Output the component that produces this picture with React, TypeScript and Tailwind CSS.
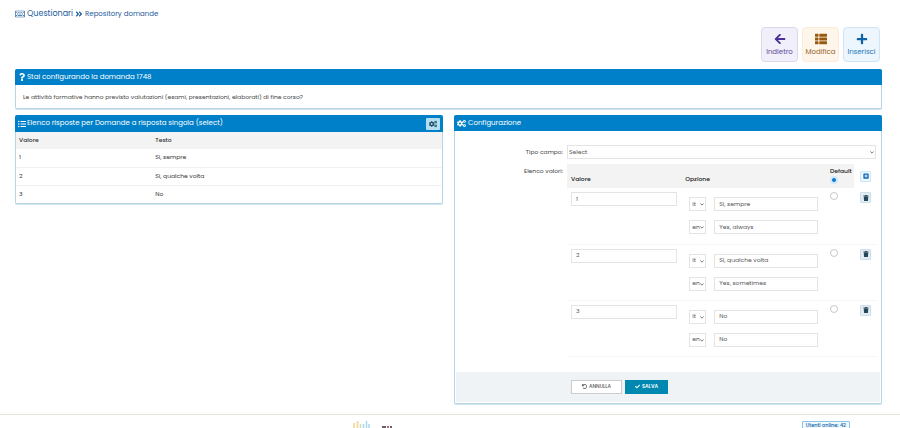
import { useState } from "react";
import {
  FaAngleDoubleRight,
  FaArrowLeft,
  FaCheck,
  FaCogs,
  FaListUl,
  FaPlus,
  FaPlusSquare,
  FaQuestion,
  FaRegKeyboard,
  FaThList,
  FaTrash,
  FaUndo,
} from "react-icons/fa";

const answers = [
  { value: "1", it: "Sì, sempre", en: "Yes, always" },
  { value: "2", it: "Sì, qualche volta", en: "Yes, sometimes" },
  { value: "3", it: "No", en: "No" },
];

const field = "h-[14px] border border-[#e4e4e4] bg-white text-[6px] text-[#555]";
const panel = "rounded-[2px] border border-t-0 border-[#b5d6e9] shadow-[0_1px_0_#d5e2e9]";

function Chevron({ className = "" }: { className?: string }) {
  return (
    <svg viewBox="0 0 6 4" className={`pointer-events-none absolute h-[3px] w-1 ${className}`}>
      <path d="M0.5 0.5 L3 3 L5.5 0.5" fill="none" stroke="#555" strokeWidth="1.2" />
    </svg>
  );
}

function Header() {
  return (
    <header>
      <nav className="flex items-center gap-[2px] pt-2 text-[#1d5d9b]">
        <FaRegKeyboard className="size-[10px]" />
        <a href="#questionari" className="text-[8px] leading-3">Questionari</a>
        <FaAngleDoubleRight className="size-2" />
        <a href="#repository" className="text-[7px] leading-3">Repository domande</a>
      </nav>
      <div className="mt-[7px] flex justify-end gap-1 pr-[2px]">
        <button className="flex h-[35px] w-[37px] flex-col items-center justify-center gap-[2px] rounded-[4px] border border-[#dcd8ec] bg-[#f1effa] text-[7px] leading-[10px] text-[#5b4a9c]">
          <FaArrowLeft className="size-3 text-[#4a2f96]" />
          Indietro
        </button>
        <button className="flex h-[35px] w-[37px] flex-col items-center justify-center gap-[2px] rounded-[4px] border border-[#fdebd8] bg-[#fff6eb] text-[7px] leading-[10px] text-[#96652a]">
          <FaThList className="size-3 text-[#96590f]" />
          Modifica
        </button>
        <button className="flex h-[35px] w-[37px] flex-col items-center justify-center gap-[2px] rounded-[4px] border border-[#cfe5f5] bg-[#edf6fd] text-[7px] leading-[10px] text-[#1a75b8]">
          <FaPlus className="size-3 text-[#0d63a5]" />
          Inserisci
        </button>
      </div>
    </header>
  );
}

function Question() {
  return (
    <section className={`mt-[7px] ${panel}`}>
      <h2 className="-mx-px flex h-4 items-center gap-px rounded-t-[2px] bg-[#0080c8] px-[3px] text-[7px] text-white">
        <FaQuestion className="size-2" />
        Stai configurando la domanda 1748
      </h2>
      <p className="px-[7px] pt-2 pb-[6px] text-[6px] leading-[9px] text-[#444]">
        Le attività formative hanno previsto valutazioni (esami, presentazioni, elaborati) di fine corso?
      </p>
    </section>
  );
}

function AnswerList() {
  return (
    <section className={panel}>
      <div className="-mx-px flex h-[17px] items-center justify-between rounded-t-[2px] bg-[#0080c8] px-[3px] text-white">
        <h2 className="flex items-center gap-px text-[7px]">
          <FaListUl className="size-2" />
          Elenco risposte per Domande a risposta singola (select)
        </h2>
        <button aria-label="Configura" className="flex h-3 w-[14px] items-center justify-center rounded-[1px] bg-[#b5def2] text-[#1d4a63]">
          <FaCogs className="size-2" />
        </button>
      </div>
      <table className="w-full text-left text-[6px] leading-[9px] text-[#333]">
        <thead>
          <tr className="h-[17px] bg-[#f3f3f3]">
            <th className="w-[32%] px-[3px] font-medium">Valore</th>
            <th className="px-[3px] font-medium">Testo</th>
          </tr>
        </thead>
        <tbody>
          {answers.map((answer) => (
            <tr key={answer.value} className="h-[18px] border-b border-[#f0f3f5] last:border-b-0">
              <td className="px-[3px]">{answer.value}</td>
              <td className="px-[3px]">{answer.it}</td>
            </tr>
          ))}
        </tbody>
      </table>
    </section>
  );
}

function OptionRow({ lang, text }: { lang: string; text: string }) {
  return (
    <div className="flex gap-2">
      <div className="relative">
        <select aria-label="Lingua" defaultValue={lang} className={`${field} w-[17px] appearance-none pl-[2px]`}>
          <option>it</option>
          <option>en</option>
        </select>
        <Chevron className="top-[6px] right-[2px]" />
      </div>
      <input aria-label="Testo opzione" defaultValue={text} className={`${field} min-w-0 flex-1 px-1`} />
    </div>
  );
}

function Radio({ checked, onChange, label }: { checked: boolean; onChange: () => void; label: string }) {
  return (
    <input
      type="radio"
      name="default"
      aria-label={label}
      checked={checked}
      onChange={onChange}
      className="block size-2 appearance-none rounded-full border border-[#c8c8c8] bg-white checked:border-2 checked:border-[#d3e9fa] checked:bg-[#0b78d0]"
    />
  );
}

function Configuration() {
  const [selected, setSelected] = useState("none");

  return (
    <section className={panel}>
      <h2 className="-mx-px flex h-4 items-center gap-[2px] rounded-t-[2px] bg-[#0080c8] px-[3px] text-[7px] text-white">
        <FaCogs className="size-[9px]" />
        Configurazione
      </h2>
      <form onSubmit={(e) => e.preventDefault()}>
        <div className="grid grid-cols-[108px_1fr] gap-x-1 gap-y-[5px] pt-[14px] pr-[5px] text-[6px] text-[#444]">
          <label htmlFor="tipo" className="text-right leading-[14px]">Tipo campo:</label>
          <div className="relative">
            <select id="tipo" defaultValue="Select" className={`${field} block w-full appearance-none px-px`}>
              <option>Select</option>
            </select>
            <Chevron className="top-[6px] right-[2px]" />
          </div>
          <span className="text-right leading-[14px]">Elenco valori:</span>
          <table className="w-full table-fixed text-left">
            <thead>
              <tr className="h-6">
                <th className="w-[37%] bg-[#f3f3f3] px-1 pt-[6px] font-medium text-[#222]">Valore</th>
                <th className="bg-[#f3f3f3] pt-[6px] pl-1 font-medium text-[#222]">Opzione</th>
                <th className="w-[36px] bg-[#f3f3f3] pt-[3px] pl-3 align-top leading-[9px] font-medium text-[#222]">
                  Default
                  <Radio checked={selected === "none"} onChange={() => setSelected("none")} label="Nessun default" />
                </th>
                <th className="w-[22px] pl-[6px]">
                  <button type="button" aria-label="Aggiungi" className="flex size-[11px] items-center justify-center rounded-[1px] border border-[#cbe7f7] bg-[#edf8fe] text-[#0b62b5]">
                    <FaPlusSquare className="size-[6px]" />
                  </button>
                </th>
              </tr>
            </thead>
            <tbody>
              {answers.map((answer) => (
                <tr key={answer.value} className="h-14 border-b border-[#f5f5f5] align-top">
                  <td className="px-1 pt-1">
                    <input aria-label="Valore" defaultValue={answer.value} className={`${field} block w-full px-1`} />
                  </td>
                  <td className="pt-[9px] pl-2">
                    <div className="flex flex-col gap-[9px]">
                      <OptionRow lang="it" text={answer.it} />
                      <OptionRow lang="en" text={answer.en} />
                    </div>
                  </td>
                  <td className="pt-1 pl-3">
                    <Radio
                      checked={selected === answer.value}
                      onChange={() => setSelected(answer.value)}
                      label={`Default ${answer.value}`}
                    />
                  </td>
                  <td className="pt-1 pl-[6px]">
                    <button type="button" aria-label="Elimina" className="flex size-[11px] items-center justify-center rounded-[1px] border border-[#cfdfe9] bg-[#e3edf3] text-[#24485a]">
                      <FaTrash className="size-[6px]" />
                    </button>
                  </td>
                </tr>
              ))}
            </tbody>
          </table>
        </div>
        <div className="mx-px mt-[15px] mb-px flex gap-[3px] bg-[#f0f3f5] py-2 pl-[115px] text-[5px]">
          <button type="reset" className="flex h-[14px] w-[51px] items-center justify-center gap-[2px] border border-[#ccc] bg-white font-medium text-[#555]">
            <FaUndo className="size-[5px]" />
            ANNULLA
          </button>
          <button type="submit" className="flex h-[14px] w-[43px] items-center justify-center gap-[2px] bg-[#0088b0] font-semibold text-white">
            <FaCheck className="size-[5px]" />
            SALVA
          </button>
        </div>
      </form>
    </section>
  );
}

function Footer() {
  return (
    <footer className="mt-[10px] flex items-start border-t border-[#e5e5de] pt-[6px] pr-[50px] pl-[352px]">
      <svg viewBox="0 0 18 20" className="h-5 w-[18px]">
        <path d="M2 2V18M5.500 0V18" stroke="#f3dca8" strokeWidth="2" />
        <path d="M8.500 3V18" stroke="#cfdfb8" strokeWidth="1.5" />
        <path d="M11.500 3V18M14.500 0V18M17 3V18" stroke="#a9d8ec" strokeWidth="1.5" />
      </svg>
      <svg viewBox="0 0 12 12" className="mt-[5px] ml-3 size-3">
        <path d="M0 0H4V12H0Z" fill="#6d6068" />
        <path d="M5 0H7V12H5Z" fill="#b06a78" />
        <path d="M8 0H10V12H8Z" fill="#6d6068" />
      </svg>
      <span className="ml-auto rounded-[1px] border border-[#8cc4e6] bg-[#f0f9ff] px-[3px] text-[5px] leading-[7px] font-medium text-[#0b62a5]">
        Utenti online: 42
      </span>
    </footer>
  );
}

export default function App() {
  return (
    <div className="h-screen overflow-hidden bg-white font-['Poppins','Inter',sans-serif]">
      <div className="pr-[18px] pl-[15px]">
        <Header />
        <Question />
        <main className="mt-[6px] grid grid-cols-2 items-start gap-[11px]">
          <AnswerList />
          <Configuration />
        </main>
      </div>
      <Footer />
    </div>
  );
}
